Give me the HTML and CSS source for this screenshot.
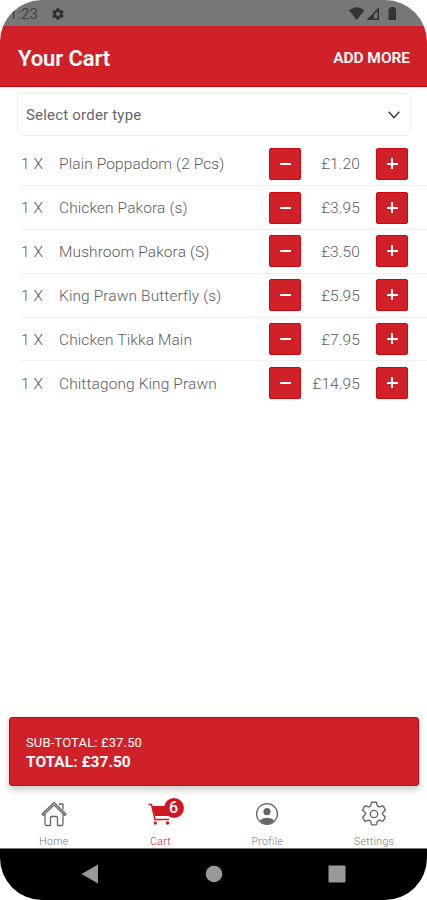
FILE: index.html
```html
<!DOCTYPE html>
<html lang="en">
<head>
<meta charset="utf-8">
<title>Your Cart</title>
<link rel="stylesheet" href="styles.css">
</head>
<body>
<div class="phone">
  <div class="status">
    <span class="clock">1:23</span>
    <svg class="status-gear" viewBox="0 0 24 24"><path fill-rule="evenodd" d="M19.4 13c.1-.3.1-.7.1-1s0-.7-.1-1l2.1-1.700c.2-.1.2-.4.1-.6l-2-3.500c-.1-.2-.4-.3-.6-.2l-2.500 1a7.500 7.500 0 0 0-1.700-1l-.4-2.600a.5.5 0 0 0-.5-.4h-4c-.3 0-.5.2-.5.4L9 5a7.500 7.500 0 0 0-1.700 1l-2.500-1c-.2-.1-.5 0-.6.2l-2 3.500c-.1.2-.1.5.1.6L4.500 11a8 8 0 0 0 0 2l-2.200 1.700c-.2.1-.2.4-.1.6l2 3.500c.1.2.4.3.6.2l2.500-1c.5.4 1.100.7 1.700 1l.4 2.600c0 .2.2.4.5.4h4c.3 0 .5-.2.5-.4l.4-2.600c.6-.3 1.200-.6 1.700-1l2.500 1c.2.1.5 0 .6-.2l2-3.500c.1-.2.1-.5-.1-.6zM12 15.500a3.500 3.500 0 1 1 0-7 3.500 3.500 0 0 1 0 7z"/></svg>
    <svg class="status-right" viewBox="0 0 50 16"><path d="M0 4.200Q7.700-1.800 15.400 4.200L7.700 14z"/><path fill-rule="evenodd" d="M30 1v13H17.500zM28.500 5 24.800 8.800V12.500H28.500z"/><path d="M39.500 2.500h2V1h4v1.500h1.500V14h-7.500z"/></svg>
  </div>
  <header class="header"><h1>Your Cart</h1><span class="add">ADD MORE</span></header>
  <main class="main">
    <div class="select"><span>Select order type</span><svg viewBox="0 0 12 8"><path d="M.7.700 6 6.800 11.300.7"/></svg></div>
    <div class="rows">
      <div class="row"><span class="qty">1 X</span><span class="name">Plain Poppadom (2 Pcs)</span><span class="btn"></span><span class="price">£1.20</span><span class="btn plus"></span></div>
      <div class="row"><span class="qty">1 X</span><span class="name">Chicken Pakora (s)</span><span class="btn"></span><span class="price">£3.95</span><span class="btn plus"></span></div>
      <div class="row"><span class="qty">1 X</span><span class="name">Mushroom Pakora (S)</span><span class="btn"></span><span class="price">£3.50</span><span class="btn plus"></span></div>
      <div class="row"><span class="qty">1 X</span><span class="name">King Prawn Butterfly (s)</span><span class="btn"></span><span class="price">£5.95</span><span class="btn plus"></span></div>
      <div class="row"><span class="qty">1 X</span><span class="name">Chicken Tikka Main</span><span class="btn"></span><span class="price">£7.95</span><span class="btn plus"></span></div>
      <div class="row"><span class="qty">1 X</span><span class="name">Chittagong King Prawn</span><span class="btn"></span><span class="price">£14.95</span><span class="btn plus"></span></div>
    </div>
    <div class="total"><span class="sub">SUB-TOTAL: £37.50</span><strong>TOTAL: £37.50</strong></div>
  </main>
  <nav class="tabs">
    <div class="tab"><svg viewBox="0 0 28 28"><path d="M2 14 14 2.500 26 14l-1.300 1.300L14 5 3.300 15.300z"/><path d="M5 14v10q0 1.500 1.500 1.500h4V17.500q0-1 1-1h5q1 0 1 1v8h4q1.500 0 1.500-1.500V14M19.500 5V4h3.500v5.500"/></svg><span>Home</span></div>
    <div class="tab active"><svg viewBox="0 0 28 28"><g class="solid"><path d="M5 6h21l-2 10H8z"/><circle cx="8.300" cy="23" r="1.700"/><circle cx="20.500" cy="23" r="1.700"/></g><path class="thick" d="M1.500 4.500H4.500L8 19.500H22"/></svg><b class="badge">6</b><span>Cart</span></div>
    <div class="tab"><svg viewBox="0 0 28 28"><circle cx="14" cy="14" r="10.400"/><g class="solid"><circle cx="14" cy="11.700" r="3.600"/><path d="M6.800 20.300q2.500-2.500 7.200-2.500t7.200 2.500Q18 24.200 14 24.200t-7.200-3.900z"/></g></svg><span>Profile</span></div>
    <div class="tab"><svg viewBox="0 0 28 28"><path transform="translate(-1.300 -.5) scale(1.093 1.080)" d="M12.300 2.500h3.400q.7 0 .8.8l.3 1.700q.2 1 1.100 1.500t1.900.1l1.600-.6q.8-.3 1.200.4l1.500 2.700q.4.700-.2 1.200l-1.300 1.100q-.9.700-.9 1.600q0 .9.900 1.600l1.300 1.100q.6.500.2 1.200l-1.500 2.700q-.4.700-1.200.4l-1.600-.6q-1-.4-1.900.1t-1.100 1.500l-.3 1.700q-.1.800-.8.800h-3.400q-.7 0-.8-.8l-.3-1.700q-.2-1-1.100-1.500t-1.900-.1l-1.600.6q-.8.300-1.200-.4l-1.500-2.700q-.4-.7.2-1.200l1.300-1.100q.9-.7.900-1.600q0-.9-.9-1.600l-1.300-1.100q-.6-.5-.2-1.200l1.500-2.700q.4-.7 1.200-.4l1.600.6q1 .4 1.900-.1t1.100-1.500l.3-1.700q.1-.8.800-.8z"/><circle cx="14" cy="14" r="3.700"/></svg><span>Settings</span></div>
  </nav>
  <div class="system"><svg viewBox="0 0 427 51"><path d="M81.500 25 98 15.500v19z"/><circle cx="214" cy="25" r="8.300"/><rect x="328.500" y="16.500" width="17" height="17" rx="1"/></svg></div>
</div>
</body>
</html>
```
FILE: styles.css
```css
* { box-sizing: border-box; }
body { margin: 0; background: #fff; font-family: Roboto, sans-serif; }
.phone { width: 427px; height: 900px; display: flex; flex-direction: column; overflow: hidden; border-radius: 42px; background: #fff; }
.status { height: 26px; flex: none; background: #777; display: flex; align-items: center; padding: 2px 28px 0 9px; }
.clock { width: 29px; font-size: 15px; color: #444; white-space: nowrap; }
.status-gear { width: 14px; height: 14px; margin-left: 13px; fill: #303030; }
.status-right { width: 50px; height: 16px; margin-left: auto; fill: #333; }
.header { height: 61px; flex: none; background: #d02128; border-bottom: 1px solid #c9000a; color: #fff; display: flex; justify-content: space-between; align-items: center; padding: 3px 17px 0 18px; }
.header h1 { margin: 0; padding-top: 1px; font-size: 22px; font-weight: 600; letter-spacing: -.1px; }
.add { font-size: 15.5px; font-weight: 600; letter-spacing: -.05px; }
.main { flex: 1; min-height: 0; display: flex; flex-direction: column; padding-top: 6px; }
.select { height: 43px; flex: none; margin: 0 16px 0 17px; border: 1px solid #eee; border-radius: 5px; display: flex; align-items: center; justify-content: space-between; padding: 0 10px 0 8px; font-size: 15px; font-weight: 400; letter-spacing: .2px; color: #666; }
.select svg { width: 12px; height: 8px; fill: none; stroke: #333; stroke-width: 1.300; }
.rows { padding: 6.500px 0 0 20px; }
.row { height: 43.800px; display: flex; align-items: center; padding-right: 19px; border-bottom: 1px solid #f1f1f1; font-size: 15.500px; font-weight: 300; letter-spacing: .1px; color: #5c5c5c; }
.row:last-child { border-bottom: 0; }
.qty { width: 39px; padding: 1px 0 0 1px; }
.name { flex: 1; white-space: nowrap; padding-top: 1px; }
.btn { width: 32px; height: 32px; border: 1px solid #cc0710; border-radius: 2px; background: linear-gradient(#fff, #fff) 10px 14px / 11px 2px no-repeat #d02128; }
.btn.plus { background: linear-gradient(#fff, #fff) 10px 14px / 11px 2px no-repeat, linear-gradient(#fff, #fff) 14px 9px / 2px 11px no-repeat #d02128; }
.price { width: 75px; padding: 1px 16px 0 0; text-align: right; }
.total { margin: auto 8px 9px 9px; height: 69px; background: #d02128; border: 1px solid #c9000a; border-radius: 3px; box-shadow: 0 4px 7px #0003; color: #fff; display: flex; flex-direction: column; padding: 16px 16px; }
.sub { font-size: 13px; line-height: 18px; letter-spacing: .15px; }
.total strong { font-size: 15.500px; line-height: 20px; }
.tabs { height: 54px; flex: none; display: grid; grid-template-columns: repeat(4, 1fr); background: #fff; position: relative; border-bottom: 1px solid #777; }
.tab { display: flex; flex-direction: column; align-items: center; padding: 5px 0 0 1px; font-size: 10.500px; letter-spacing: .3px; color: #777; position: relative; }
.tab svg { width: 28px; height: 28px; flex: none; fill: none; stroke: #666; stroke-width: 1.300; stroke-linejoin: round; }
.tab span { line-height: 12px; margin-top: 8px; font-weight: 300; }
.tab .solid { fill: #666; stroke: none; }
.tab.active { color: #cf1720; }
.tab.active svg { stroke: #cf1720; }
.tab.active .solid { fill: #cf1720; }
.thick { stroke-width: 1.500; }
.badge { position: absolute; left: 57px; top: 3px; width: 20px; height: 20px; border-radius: 50%; background: #cf1720; color: #fff; font-size: 16px; font-weight: 500; line-height: 20px; text-align: center; }
.system { height: 51px; flex: none; background: #000; }
.system svg { width: 427px; height: 51px; fill: #999; display: block; }
```
